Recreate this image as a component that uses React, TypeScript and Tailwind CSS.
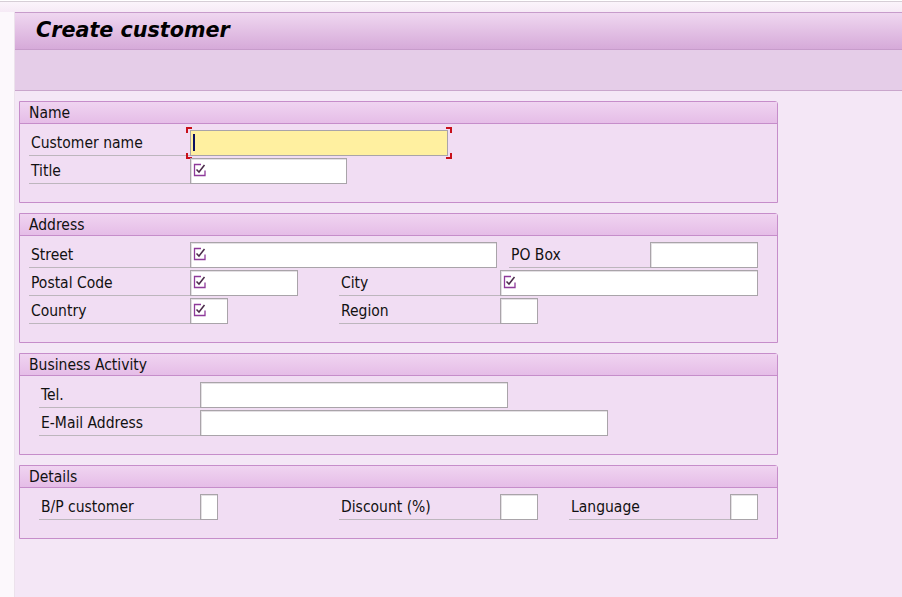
import React from "react";

const font = { fontFamily: '"DejaVu Sans Condensed", "DejaVu Sans", sans-serif' };

const CheckIcon = () => (
  <svg width="14" height="14" viewBox="0 0 14 14" className="absolute left-[2px] top-[4px]">
    <path d="M12 7.5 V12.5 H1.5 V1.5 H8" fill="none" stroke="#8e3a9a" strokeWidth="1.3" />
    <path d="M3.5 6.5 L6 9 L11.5 2" fill="none" stroke="#4a2a4a" strokeWidth="1.5" />
  </svg>
);

type FieldProps = {
  label: string;
  labelW?: number;
  inputW: number;
  check?: boolean;
  ml?: string;
};

const Input = ({ w, check }: { w: number; check?: boolean }) => (
  <div
    className="relative h-[26px] bg-white border border-[#a9a4a9] shadow-[inset_1px_1px_0_#e4e0e4]"
    style={{ width: w }}
  >
    {check && <CheckIcon />}
  </div>
);

const Label = ({ text, w }: { text: string; w: number }) => (
  <div
    className="h-[26px] border-b border-[#bdb6bd] pl-[2px] text-[15.5px] leading-[26px] text-[#111] whitespace-nowrap"
    style={{ width: w }}
  >
    {text}
  </div>
);

const Field = ({ label, labelW = 161, inputW, check, ml = "" }: FieldProps) => (
  <div className={`flex items-end ${ml}`}>
    <Label text={label} w={labelW} />
    <Input w={inputW} check={check} />
  </div>
);

const Row = ({ children, indent = false }: { children: React.ReactNode; indent?: boolean }) => (
  <div className={`flex h-[28px] items-end ${indent ? "pl-[19px]" : "pl-[9px]"}`}>{children}</div>
);

const Group = ({ title, children }: { title: string; children: React.ReactNode }) => (
  <div className="w-[759px] border border-[#c68dca] rounded-tr-[3px] bg-[#f1ddf3]">
    <div className="h-[22px] border-b border-[#c68dca] bg-gradient-to-b from-[#f0d4f1] to-[#e5bde7] pl-[9px] text-[15.5px] leading-[22px] text-[#111]">
      {title}
    </div>
    <div className="pt-[4px] pb-[18px]">{children}</div>
  </div>
);

const Corner = ({ pos }: { pos: string }) => (
  <div className={`absolute h-[6px] w-[6px] border-[#c8101a] ${pos}`} />
);

export default function App() {
  return (
    <div className="w-[902px] h-[597px] overflow-hidden flex flex-col bg-[#fcf8fc]" style={font}>
      <div className="h-px bg-white" />
      <div className="h-px bg-[#d6ced6]" />
      <div className="h-[10px] bg-gradient-to-b from-[#fbf4fb] to-[#f6eaf6]" />
      <div className="flex flex-1">
        <div className="w-[15px] bg-[#fcf8fc] border-r border-[#ece2ec]" />
        <div className="flex-1 flex flex-col bg-[#f4e7f6]">
          <div className="h-[38px] border-t border-b border-[#c79ccb] bg-gradient-to-b from-[#efd7f0] to-[#d6aad9] pl-[21px]">
            <span
              className="text-[20.7px] font-bold italic leading-[34px] text-black"
              style={{ fontFamily: '"DejaVu Sans", sans-serif' }}
            >
              Create customer
            </span>
          </div>
          <div className="h-[41px] bg-[#e5cde8] border-b border-[#c9a6cc]" />
          <div className="flex flex-col gap-[10px] pt-[10px] pl-[4px]">
            <Group title="Name">
              <Row>
                <div className="flex items-end">
                  <Label text="Customer name" w={161} />
                  <div className="relative h-[26px] w-[258px] bg-[#fff0a0] border border-[#a9a4a9]">
                    <div className="absolute left-[2px] top-[3px] h-[17px] w-[2px] bg-[#0a1060]" />
                    <Corner pos="-left-[5px] -top-[4px] border-l-2 border-t-2" />
                    <Corner pos="-right-[5px] -top-[4px] border-r-2 border-t-2" />
                    <Corner pos="-left-[5px] -bottom-[4px] border-l-2 border-b-2" />
                    <Corner pos="-right-[5px] -bottom-[4px] border-r-2 border-b-2" />
                  </div>
                </div>
              </Row>
              <Row>
                <Field label="Title" inputW={157} check />
              </Row>
            </Group>

            <Group title="Address">
              <Row>
                <Field label="Street" inputW={307} check />
                <Field label="PO Box" labelW={141} inputW={108} ml="ml-[12px]" />
              </Row>
              <Row>
                <Field label="Postal Code" inputW={108} check />
                <Field label="City" inputW={258} ml="ml-[41px]" check />
              </Row>
              <Row>
                <Field label="Country" inputW={38} check />
                <Field label="Region" inputW={38} ml="ml-[111px]" />
              </Row>
            </Group>

            <Group title="Business Activity">
              <Row indent>
                <Field label="Tel." inputW={308} />
              </Row>
              <Row indent>
                <Field label="E-Mail Address" inputW={408} />
              </Row>
            </Group>

            <Group title="Details">
              <Row indent>
                <Field label="B/P customer" inputW={18} />
                <Field label="Discount (%)" inputW={38} ml="ml-[121px]" />
                <Field label="Language" inputW={28} ml="ml-[31px]" />
              </Row>
            </Group>
          </div>
        </div>
      </div>
    </div>
  );
}
